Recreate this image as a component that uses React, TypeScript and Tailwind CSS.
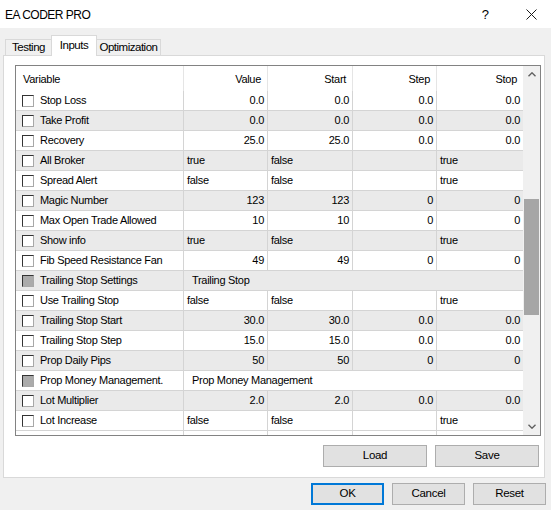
import React from 'react';

type Row = {
  name: string;
  group?: string;
  cells?: string[];
};

const rows: Row[] = [
  { name: 'Stop Loss', cells: ['0.0', '0.0', '0.0', '0.0'] },
  { name: 'Take Profit', cells: ['0.0', '0.0', '0.0', '0.0'] },
  { name: 'Recovery', cells: ['25.0', '25.0', '0.0', '0.0'] },
  { name: 'All Broker', cells: ['true', 'false', '', 'true'] },
  { name: 'Spread Alert', cells: ['false', 'false', '', 'true'] },
  { name: 'Magic Number', cells: ['123', '123', '0', '0'] },
  { name: 'Max Open Trade Allowed', cells: ['10', '10', '0', '0'] },
  { name: 'Show info', cells: ['true', 'false', '', 'true'] },
  { name: 'Fib Speed Resistance Fan', cells: ['49', '49', '0', '0'] },
  { name: 'Trailing Stop Settings', group: 'Trailing Stop' },
  { name: 'Use Trailing Stop', cells: ['false', 'false', '', 'true'] },
  { name: 'Trailing Stop Start', cells: ['30.0', '30.0', '0.0', '0.0'] },
  { name: 'Trailing Stop Step', cells: ['15.0', '15.0', '0.0', '0.0'] },
  { name: 'Prop Daily Pips', cells: ['50', '50', '0', '0'] },
  { name: 'Prop Money Management.', group: 'Prop Money Management' },
  { name: 'Lot Multiplier', cells: ['2.0', '2.0', '0.0', '0.0'] },
  { name: 'Lot Increase', cells: ['false', 'false', '', 'true'] },
];

// column widths: Value, Start, Step, Stop
const colW = ['w-[84px]', 'w-[85px]', 'w-[84px]', 'w-[86px]'];
const headers = ['Value', 'Start', 'Step', 'Stop'];

function CheckBox({ disabled }: { disabled?: boolean }) {
  return (
    <div
      className={`w-[12px] h-[12px] shrink-0 border border-t-[#333333] border-l-[#333333] border-r-[#a8a8a8] border-b-[#a8a8a8] ${
        disabled ? 'bg-[#ababab]' : 'bg-white'
      }`}
    ></div>
  );
}

function Chevron({ down }: { down?: boolean }) {
  return (
    <svg width="8" height="5" viewBox="0 0 8 5">
      <path
        d={down ? 'M0.5 0.8 L4 4.2 L7.5 0.8' : 'M0.5 4.2 L4 0.8 L7.5 4.2'}
        fill="none"
        stroke="#606060"
        strokeWidth="1.4"
      />
    </svg>
  );
}

function WinButton({ label, w, focused }: { label: string; w: string; focused?: boolean }) {
  return (
    <button
      className={`${w} h-[22px] bg-[#e1e1e1] text-black text-[11.5px] tracking-[-0.3px] flex items-center justify-center ${
        focused ? 'border-2 border-[#0078d7]' : 'border border-[#adadad]'
      }`}
    >
      {label}
    </button>
  );
}

export default function App() {
  return (
    <div className="w-[551px] h-[510px] bg-[#f0f0f0] overflow-hidden font-['Liberation_Sans',Arial,sans-serif] text-black select-none">
      {/* Title bar */}
      <div className="h-[28px] bg-white flex items-center pl-[5px] pr-[14px]">
        <span className="text-[12px] tracking-[-0.5px] pt-[1px]">EA CODER PRO</span>
        <span className="ml-auto text-[13px] mr-[37px] pt-[1px]">?</span>
        <svg width="11" height="11" viewBox="0 0 11 11">
          <path d="M0.5 0.5 L10.5 10.5 M10.5 0.5 L0.5 10.5" stroke="#1a1a1a" strokeWidth="1" />
        </svg>
      </div>

      {/* Tabs */}
      <div className="h-[27px] flex items-end pl-[5px]">
        <div className="w-[46px] h-[16px] border-l border-t border-[#d9d9d9] bg-[#f0f0f0] flex items-center justify-center text-[11.5px] tracking-[-0.5px]">
          Testing
        </div>
        <div className="relative z-10 w-[46px] h-[21px] -mb-[1px] border-x border-t border-[#d9d9d9] bg-white flex items-center justify-center text-[11.5px] tracking-[-0.5px] pb-[1px]">
          Inputs
        </div>
        <div className="w-[64px] h-[16px] border-r border-t border-[#d9d9d9] bg-[#f0f0f0] flex items-center justify-center text-[11.5px] tracking-[-0.5px]">
          Optimization
        </div>
      </div>

      {/* Panel */}
      <div className="ml-[3px] w-[542px] h-[423px] border border-[#d9d9d9] bg-white pt-[9px]">
        {/* List view */}
        <div className="ml-[11px] w-[526px] h-[371px] border border-[#828282] flex overflow-hidden text-[11px] tracking-[-0.3px]">
          <div className="flex-1 flex flex-col overflow-hidden">
            {/* Header */}
            <div className="h-[25px] shrink-0 flex bg-white">
              <div className="w-[168px] border-r border-[#e5e5e5] flex items-center pl-[7px] pt-[1px]">Variable</div>
              {headers.map((h, i) => (
                <div
                  key={h}
                  className={`${colW[i]} ${i < 3 ? 'border-r border-[#e5e5e5]' : ''} flex items-center justify-end pr-[6px] pt-[1px]`}
                >
                  {h}
                </div>
              ))}
            </div>

            {/* Rows */}
            {rows.map((r, idx) => (
              <div
                key={r.name}
                className={`h-[20px] shrink-0 flex border-b border-[#d4d4d4] ${idx % 2 === 1 ? 'bg-[#eaeaea]' : 'bg-white'}`}
              >
                <div className="w-[168px] border-r border-[#d4d4d4] flex items-center pl-[6px] gap-[6px]">
                  <CheckBox disabled={!!r.group} />
                  <span className="whitespace-nowrap">{r.name}</span>
                </div>
                {r.group ? (
                  <div className="flex-1 flex items-center pl-[8px] whitespace-nowrap">{r.group}</div>
                ) : (
                  r.cells!.map((c, i) => {
                    const num = /^[0-9.]+$/.test(c);
                    return (
                      <div
                        key={i}
                        className={`${colW[i]} ${i < 3 ? 'border-r border-[#d4d4d4]' : ''} flex items-center ${
                          num ? 'justify-end pr-[3px]' : 'justify-start pl-[3px]'
                        }`}
                      >
                        {c}
                      </div>
                    );
                  })
                )}
              </div>
            ))}

            {/* next row, scrolled out of view */}
            <div className="h-[20px] shrink-0 flex bg-white">
              <div className="w-[168px] border-r border-[#d4d4d4]"></div>
              {colW.map((w, i) => (
                <div key={i} className={`${w} ${i < 3 ? 'border-r border-[#d4d4d4]' : ''}`}></div>
              ))}
            </div>
          </div>

          {/* Scrollbar */}
          <div className="w-[17px] shrink-0 bg-[#f0f0f0] flex flex-col">
            <div className="h-[17px] flex items-center justify-center">
              <Chevron />
            </div>
            <div className="h-[116px]"></div>
            <div className="h-[116px] ml-[1px] w-[15px] bg-[#a6a6a6]"></div>
            <div className="flex-1"></div>
            <div className="h-[17px] flex items-center justify-center">
              <Chevron down />
            </div>
          </div>
        </div>

        {/* Load / Save */}
        <div className="flex justify-end gap-[8px] pr-[5px] mt-[9px]">
          <WinButton label="Load" w="w-[104px]" />
          <WinButton label="Save" w="w-[104px]" />
        </div>
      </div>

      {/* Dialog buttons */}
      <div className="flex justify-end gap-[8px] pr-[5px] mt-[5px]">
        <WinButton label="OK" w="w-[73px]" focused />
        <WinButton label="Cancel" w="w-[73px]" />
        <WinButton label="Reset" w="w-[73px]" />
      </div>
    </div>
  );
}
